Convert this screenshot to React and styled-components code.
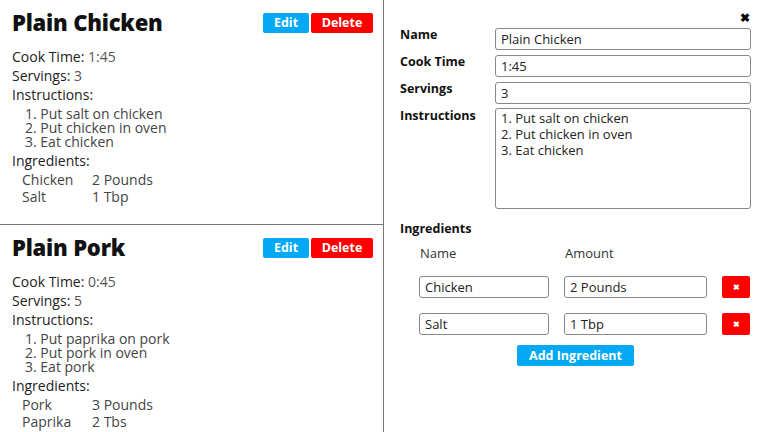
import React from "react";
import styled, { createGlobalStyle } from "styled-components";

const Global = createGlobalStyle`
  html, body { margin: 0; padding: 0; background: #fff; }
  body { font-family: "Open Sans", "Liberation Sans", sans-serif; color: #111; }
  * { box-sizing: border-box; }
`;

const Page = styled.div`
  display: flex;
  width: 768px;
  height: 432px;
  overflow: hidden;
`;

const LeftPanel = styled.div`
  width: 384px;
  border-right: 1px solid #777;
  display: flex;
  flex-direction: column;
`;

const Card = styled.section`
  height: 225px;
  flex-shrink: 0;
  padding: 10px 10px 0 12px;
  border-bottom: ${(p) => (p.$last ? "none" : "1px solid #777")};
`;

const CardHeader = styled.div`
  display: flex;
  justify-content: space-between;
  align-items: flex-start;
  height: 38px;
`;

const Title = styled.h2`
  margin: 0;
  font-size: 22px;
  line-height: 24px;
  font-weight: 800;
  letter-spacing: -0.2px;
  color: #111;
`;

const ButtonGroup = styled.div`
  display: flex;
  gap: 2px;
  margin-top: 3px;
`;

const Button = styled.button`
  border: none;
  border-radius: 2px;
  height: 20px;
  width: ${(p) => (p.$w ? `${p.$w}px` : "auto")};
  padding: 0;
  font-family: inherit;
  font-weight: 700;
  font-size: 12.5px;
  color: #fff;
  background: ${(p) => (p.$variant === "danger" ? "#ff0000" : "#03a9f4")};
  cursor: pointer;
  line-height: 20px;
`;

const InfoLine = styled.div`
  font-size: 14px;
  line-height: 18px;
  color: #222;
  margin-bottom: ${(p) => p.$mb ?? 1}px;
`;

const Value = styled.span`
  color: #555;
`;

const Steps = styled.ol`
  margin: 3px 0 3px 0;
  padding: 0 0 0 13px;
  list-style-position: inside;
  font-size: 14px;
  line-height: 14px;
  color: #444;
`;

const IngTable = styled.div`
  display: grid;
  grid-template-columns: 70px auto;
  padding-left: 10px;
  margin-top: 1px;
  font-size: 14px;
  line-height: 17px;
  color: #444;
`;

const RightPanel = styled.div`
  flex: 1;
  padding: 8px 17px 0 16px;
  display: flex;
  flex-direction: column;
`;

const CloseRow = styled.div`
  display: flex;
  justify-content: flex-end;
  height: 20px;
  padding-right: 1px;
`;

const CloseButton = styled.button`
  border: none;
  background: none;
  padding: 0;
  margin-top: 0;
  font-size: 12px;
  font-weight: 900;
  line-height: 12px;
  color: #000;
  cursor: pointer;
`;

const FormGrid = styled.div`
  display: grid;
  grid-template-columns: 95px 1fr;
  row-gap: 5px;
`;

const Label = styled.label`
  font-size: 12.5px;
  font-weight: 700;
  color: #111;
  line-height: 14px;
`;

const Input = styled.input`
  width: 100%;
  height: 22px;
  border: 1px solid #888;
  border-radius: 3px;
  padding: 0 5px;
  font-family: inherit;
  font-size: 13px;
  color: #222;
  outline: none;
`;

const TextArea = styled.textarea`
  width: 100%;
  height: 101px;
  margin-top: -1px;
  border: 1px solid #888;
  border-radius: 3px;
  padding: 1px 5px;
  font-family: inherit;
  font-size: 13px;
  line-height: 16px;
  color: #222;
  resize: none;
  outline: none;
`;

const SectionLabel = styled(Label)`
  display: block;
  margin-top: 13px;
`;

const IngGrid = styled.div`
  display: grid;
  grid-template-columns: 130px 143px 28px;
  column-gap: 15px;
  padding-left: 19px;
  align-items: center;
`;

const SubHead = styled.div`
  font-size: 13px;
  color: #333;
  height: 40px;
  padding-top: 8px;
  padding-left: 1px;
`;

const RowInput = styled(Input)`
  margin-bottom: 15px;
`;

const RemoveButton = styled.button`
  width: 28px;
  height: 22px;
  border: none;
  border-radius: 2px;
  background: #ff0000;
  color: #fff;
  font-size: 8px;
  font-weight: 900;
  padding: 0;
  margin-bottom: 15px;
  cursor: pointer;
`;

const AddRow = styled.div`
  display: flex;
  justify-content: center;
  margin-top: -5px;
`;

const AddButton = styled(Button)`
  height: 21px;
  font-size: 12.5px;
`;

const recipes = [
  {
    name: "Plain Chicken",
    time: "1:45",
    servings: "3",
    steps: ["Put salt on chicken", "Put chicken in oven", "Eat chicken"],
    ingredients: [
      ["Chicken", "2 Pounds"],
      ["Salt", "1 Tbp"],
    ],
  },
  {
    name: "Plain Pork",
    time: "0:45",
    servings: "5",
    steps: ["Put paprika on pork", "Put pork in oven", "Eat pork"],
    ingredients: [
      ["Pork", "3 Pounds"],
      ["Paprika", "2 Tbs"],
    ],
  },
];

function RecipeCard({ r, last }) {
  return (
    <Card $last={last}>
      <CardHeader>
        <Title>{r.name}</Title>
        <ButtonGroup>
          <Button $w={46}>Edit</Button>
          <Button $variant="danger" $w={62}>Delete</Button>
        </ButtonGroup>
      </CardHeader>
      <InfoLine>
        Cook Time: <Value>{r.time}</Value>
      </InfoLine>
      <InfoLine>
        Servings: <Value>{r.servings}</Value>
      </InfoLine>
      <InfoLine $mb={0}>Instructions:</InfoLine>
      <Steps>
        {r.steps.map((s) => (
          <li key={s}>{s}</li>
        ))}
      </Steps>
      <InfoLine $mb={0}>Ingredients:</InfoLine>
      <IngTable>
        {r.ingredients.map(([n, a]) => (
          <React.Fragment key={n}>
            <span>{n}</span>
            <span>{a}</span>
          </React.Fragment>
        ))}
      </IngTable>
    </Card>
  );
}

export default function App() {
  const r = recipes[0];
  return (
    <>
      <Global />
      <Page>
        <LeftPanel>
          {recipes.map((rec, i) => (
            <RecipeCard key={rec.name} r={rec} last={i === recipes.length - 1} />
          ))}
        </LeftPanel>
        <RightPanel>
          <CloseRow>
            <CloseButton>✖</CloseButton>
          </CloseRow>
          <FormGrid>
            <Label>Name</Label>
            <Input defaultValue={r.name} />
            <Label>Cook Time</Label>
            <Input defaultValue={r.time} />
            <Label>Servings</Label>
            <Input defaultValue={r.servings} />
            <Label>Instructions</Label>
            <TextArea
              defaultValue={r.steps.map((s, i) => `${i + 1}. ${s}`).join("\n")}
            />
          </FormGrid>
          <SectionLabel>Ingredients</SectionLabel>
          <IngGrid>
            <SubHead>Name</SubHead>
            <SubHead>Amount</SubHead>
            <span />
            {r.ingredients.map(([n, a]) => (
              <React.Fragment key={n}>
                <RowInput defaultValue={n} />
                <RowInput defaultValue={a} />
                <RemoveButton>✖</RemoveButton>
              </React.Fragment>
            ))}
          </IngGrid>
          <AddRow>
            <AddButton $w={117}>Add Ingredient</AddButton>
          </AddRow>
        </RightPanel>
      </Page>
    </>
  );
}
